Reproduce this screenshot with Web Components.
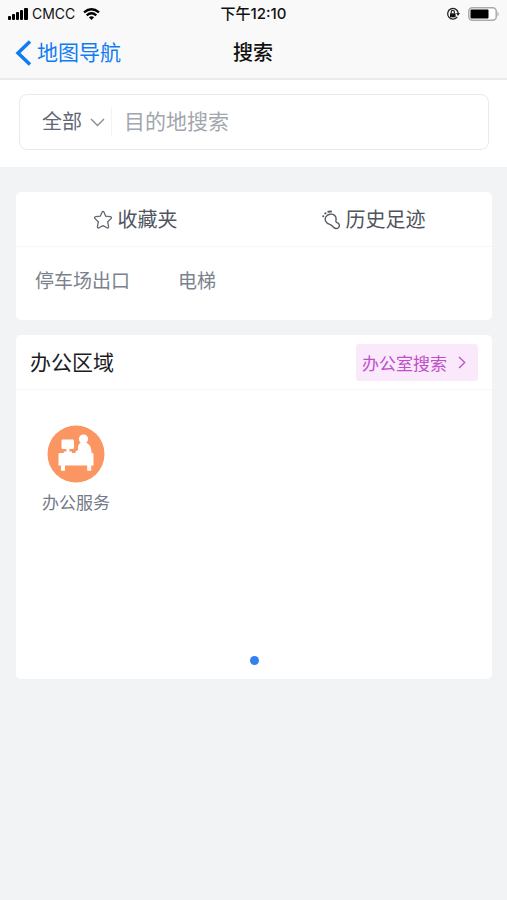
<!DOCTYPE html>
<html lang="zh-CN">
<head>
<meta charset="utf-8">
<meta name="viewport" content="width=device-width, initial-scale=1">
<title>搜索</title>
<style>
  html, body { margin: 0; min-height: 100%; background: #f1f3f5; }
  body { font-family: "Liberation Sans", "Noto Sans CJK SC", sans-serif; color: #4f5663; }
</style>
</head>
<body>
<search-app></search-app>

<script>
const define = (name, html, setup) => {
  const template = document.createElement('template');
  template.innerHTML = `<style>*{box-sizing:border-box}svg{display:block;flex:none}button,select,input{font:inherit;color:inherit;margin:0;padding:0;border:0;background:none;outline:0}a{color:inherit;text-decoration:none}</style>` + html;
  customElements.define(name, class extends HTMLElement {
    constructor() {
      super();
      this.attachShadow({ mode: 'open' }).append(template.content.cloneNode(true));
      if (setup) setup(this.shadowRoot);
    }
  });
};

define('status-bar', `
<style>
  :host { display: grid; grid-template-columns: 1fr auto 1fr; align-items: center; height: 28px; padding: 0 8px; color: #111; font-family: Inter, "Noto Sans CJK SC", sans-serif; font-size: 14px; line-height: 20px; }
  .side { display: flex; align-items: center; gap: 4px; }
  .end { justify-content: flex-end; gap: 8px; }
  .wifi { margin-left: 4px; }
  time { font-size: 15px; font-weight: 500; }
</style>
<div class="side">
  <svg width="20" height="12" viewBox="0 0 20 12" fill="#000"><rect y="8" width="3" height="4" rx="1"/><rect x="4" y="6" width="3" height="6" rx="1"/><rect x="8" y="4" width="3" height="8" rx="1"/><rect x="12" y="2" width="3" height="10" rx="1"/><rect x="16" width="4" height="12" rx="1"/></svg>
  <span>CMCC</span>
  <svg class="wifi" width="17" height="12" viewBox="0 0 17 12" fill="none" stroke="#000" stroke-width="2.3"><path d="M1 4.4Q8.500-1.900 16 4.400M3.700 7.300Q8.500 3.300 13.300 7.300"/><path d="M8.500 12 5.900 9.200Q8.500 7.100 11.100 9.200Z" fill="#000" stroke="none"/></svg>
</div>
<time>下午12:10</time>
<div class="side end">
  <svg width="14" height="14" viewBox="0 0 14 14" fill="none" stroke="#222"><path d="M11.300 9.800A5.300 5.300 0 1 1 12.200 6" stroke-width="1.300"/><path d="M10 6h4l-2 3z" fill="#222" stroke="none"/><rect x="4" y="6.300" width="5.600" height="4" fill="#111" stroke="none"/><path d="M5.200 6.500V5a1.600 1.600 0 0 1 3.200 0v1.500" stroke-width="1.200"/></svg>
  <svg width="31" height="14" viewBox="0 0 31 14"><rect x=".8" y=".8" width="27.400" height="12.400" rx="3.500" fill="#fff" stroke="#aaa" stroke-width="1.500"/><rect x="2.500" y="2.500" width="18" height="9" rx="1" fill="#000"/><path d="M29.500 4.500q2.500 2.500 0 5z" fill="#aaa"/></svg>
</div>`);

define('nav-bar', `
<style>
  :host { display: grid; grid-template-columns: 1fr auto 1fr; align-items: center; height: 52px; padding: 0 16px 0 15px; border-bottom: 2px solid #ebebec; font-size: 21px; line-height: 32px; }
  a { display: flex; align-items: center; gap: 5px; color: #117cf2; }
  h1 { margin: 0; font-size: 20px; font-weight: 500; color: #111; }
</style>
<a href="#map"><svg width="17" height="26" viewBox="0 0 17 26" fill="none" stroke="#117cf2" stroke-width="3.500"><path d="M15 1.500 3 13l12 11.500"/></svg><slot name="back"></slot></a>
<h1><slot></slot></h1>`);

define('search-field', `
<style>
  :host { display: block; padding: 14px 18px 17px 19px; background: #fff; }
  form { display: flex; align-items: center; height: 56px; padding-left: 22px; border: 1px solid #e9eaec; border-radius: 8px; }
  .scope { display: flex; align-items: center; gap: 8px; padding-right: 6px; border-right: 1px solid #f2f3f5; height: 28px; }
  select { appearance: none; width: 40px; font-size: 20px; line-height: 28px; color: #626974; }
  input { flex: 1; min-width: 0; margin-left: 12px; height: 32px; font-size: 21px; color: #4f5663; }
  input::placeholder { color: #a2a7ae; opacity: 1; }
</style>
<form>
  <label class="scope"><select aria-label="搜索范围"><option>全部</option></select><svg width="15" height="9" viewBox="0 0 15 9" fill="none" stroke="#858b93" stroke-width="1.300"><path d="m1 1 6.500 6.500L14 1"/></svg></label>
  <input type="text" aria-label="目的地搜索" placeholder="目的地搜索">
</form>`, root => root.querySelector('form').addEventListener('submit', e => e.preventDefault()));

define('panel-card', `
<style>
  :host { display: block; background: #fff; border-radius: 5px; }
  header { display: flex; align-items: center; height: 55px; border-bottom: 1px solid #f7f7f8; }
</style>
<header><slot name="header"></slot></header>
<slot></slot>`);

define('tab-button', `
<style>
  :host { flex: 1; display: flex; justify-content: center; padding-top: 2px; }
  button { display: flex; align-items: center; gap: 5px; font-size: 20px; line-height: 28px; color: #4f545e; }
</style>
<button type="button"><slot name="icon"></slot><slot></slot></button>`);

define('place-list', `
<style>
  :host { display: flex; gap: 48px; height: 73px; padding: 21px 19px; font-size: 19px; line-height: 28px; color: #7b828d; }
</style>
<a href="#exit">停车场出口</a><a href="#lift">电梯</a>`);

define('area-heading', `
<style>
  :host { flex: 1; display: flex; align-items: center; justify-content: space-between; padding: 0 14px; }
  h2 { margin: 0; padding-top: 2px; font-size: 21px; line-height: 30px; font-weight: 400; color: #1c1c1e; }
  button { display: flex; align-items: center; gap: 11px; height: 37px; padding: 0 12px 0 6px; border-radius: 3px; background: #f9e9fa; color: #c04ecb; font-size: 17px; }
</style>
<h2><slot></slot></h2>
<button type="button"><slot name="action"></slot><svg width="8" height="13" viewBox="0 0 8 13" fill="none" stroke="#c04ecb" stroke-width="1.300"><path d="m1 1 5.700 5.500L1 12"/></svg></button>`);

define('service-pager', `
<style>
  :host { display: flex; flex-direction: column; justify-content: space-between; min-height: 289px; padding: 35px 16px 14px; }
  .grid { display: grid; grid-template-columns: repeat(auto-fill, minmax(88px, 1fr)); }
  .grid a { display: flex; flex-direction: column; align-items: center; justify-self: start; width: 88px; gap: 8px; font-size: 17px; line-height: 26px; color: #747b87; }
  button { align-self: center; width: 9px; height: 9px; border-radius: 50%; background: #3381ef; }
</style>
<div class="grid"><a href="#office">
  <svg width="58" height="58" viewBox="0 0 58 58"><circle cx="29" cy="29" r="28.500" fill="#fb9562"/><g fill="#fff"><rect x="14.500" y="14.500" width="12.500" height="9.500" rx="1.200"/><path d="M19.400 23.500h3v3h2.600v2h-8.200v-2h2.600z"/><circle cx="36.500" cy="14" r="4.600"/><path d="M28.500 29v-2.500l2.500-1.500v-3q.4-4.500 5.500-4.800 7.500.3 8 9V30z"/><path d="M12.500 28h33q1 0 1 1v11.500h-2.300v5.200h-4v-5.200H18v5.200h-4v-5.200h-2.500V29q0-1 1-1z"/></g></svg>
  <span>办公服务</span></a></div>
<button type="button" aria-label="第 1 页"></button>`);

define('search-app', `
<style>
  :host { display: block; }
  .top { background: #f9f9f9; }
  main { display: grid; gap: 15px; padding: 25px 15px 25px 16px; }
</style>
<div class="top"><status-bar></status-bar><nav-bar><span slot="back">地图导航</span>搜索</nav-bar></div>
<search-field></search-field>
<main>
  <panel-card>
    <tab-button slot="header"><svg slot="icon" width="20" height="20" viewBox="0 0 20 20" fill="none" stroke="#626770" stroke-width="1.300" stroke-linejoin="round"><path d="M10 1.300c.6 0 .8.400 1 .9l1.700 4 4.600.5c1.200.2 1.600 1 .7 1.900l-3.300 3.200.9 4.800c.2 1.200-.6 1.700-1.600 1.200L10 15.600l-4 2.200c-1 .5-1.800 0-1.600-1.200l.9-4.800L2 8.600c-.9-.9-.5-1.700.7-1.900l4.600-.5 1.700-4c.2-.5.4-.9 1-.9z"/></svg>收藏夹</tab-button>
    <tab-button slot="header"><svg slot="icon" width="20" height="20" viewBox="0 0 20 20" fill="none" stroke="#565b64" stroke-width="1.400" stroke-linecap="round"><path d="M4.800 7C6.500 4 11 3.200 13.600 5.400c2.200 1.900 1.500 4.300 1.300 5.500-.2 1.300.2 1.500 1.300 1.800 2.500.8 2.700 3.500 1.200 5-1.700 1.500-3.800.6-5.100-.8-1.500-1.600-2.200-2.200-4.200-2.800C5 13.200 3.300 9.800 4.800 7Z"/><path d="M2.200 6.200h.1M4.200 3.500l.3-.2M7.400 1.800l2.600-.2" stroke-width="2"/></svg>历史足迹</tab-button>
    <place-list></place-list>
  </panel-card>
  <panel-card>
    <area-heading slot="header">办公区域<span slot="action">办公室搜索</span></area-heading>
    <service-pager></service-pager>
  </panel-card>
</main>`);
</script>
</body>
</html>
